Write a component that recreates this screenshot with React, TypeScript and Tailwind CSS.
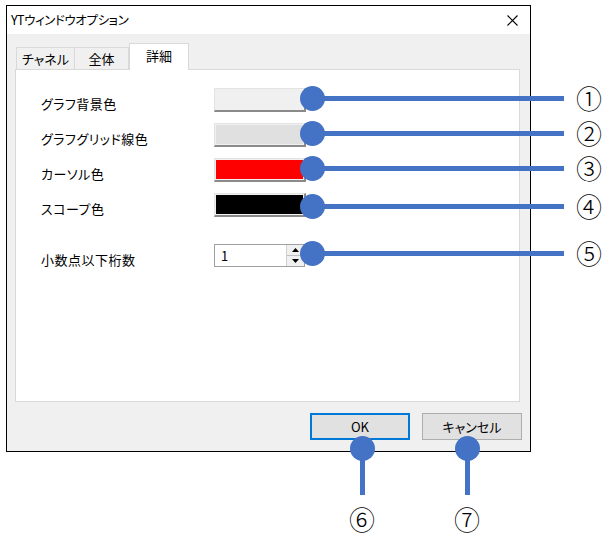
const rows = [
  { label: 'グラフ背景色', fill: 'bg-[#f0f0f0]' },
  { label: 'グラフグリッド線色', fill: 'bg-[#e0e0e0]' },
  { label: 'カーソル色', fill: 'bg-[#ff0000]' },
  { label: 'スコープ色', fill: 'bg-black' },
];

// callouts on the right: circle centre y and number
const sideMarks = [
  { y: 98, n: '①' },
  { y: 133, n: '②' },
  { y: 168, n: '③' },
  { y: 206, n: '④' },
  { y: 253, n: '⑤' },
];

const bottomMarks = [
  { x: 362, n: '⑥' },
  { x: 467, n: '⑦' },
];

function ColorButton({ fill }: { fill: string }) {
  return (
    <div className="w-[92px] h-[24px] border-t border-l border-[#e3e3e3] border-b-2 border-r-2 border-b-[#8a8a8a] border-r-[#8a8a8a] bg-[#f0f0f0] p-[1px]">
      <div className={`w-full h-full ${fill}`} />
    </div>
  );
}

function SpinBox() {
  return (
    <div className="w-[91px] h-[23px] border border-[#a0a0a0] bg-white flex">
      <div className="flex-1 pl-[6px] text-[13px] leading-[21px] text-black">1</div>
      <div className="w-[18px] flex flex-col border-l border-[#d0d0d0]">
        <div className="flex-1 bg-[#f0f0f0] border-b border-[#c0c0c0] flex items-center justify-center">
          <svg width="7" height="4" viewBox="0 0 7 4">
            <path d="M0 4 L3.5 0 L7 4 Z" fill="#000" />
          </svg>
        </div>
        <div className="flex-1 bg-[#f0f0f0] flex items-center justify-center">
          <svg width="7" height="4" viewBox="0 0 7 4">
            <path d="M0 0 L3.5 4 L7 0 Z" fill="#000" />
          </svg>
        </div>
      </div>
    </div>
  );
}

export default function App() {
  return (
    <div className="relative w-[612px] h-[539px] bg-white overflow-hidden font-['Noto_Sans_CJK_JP','Noto_Sans',sans-serif] [font-feature-settings:'palt'] text-black">
      {/* Dialog window */}
      <div className="ml-[6px] mt-[5px] w-[525px] h-[447px] border border-black flex flex-col">
        {/* Title bar */}
        <div className="h-[28px] bg-white flex items-center justify-between">
          <span className="pl-[4px] text-[12.5px] tracking-[-0.4px]">YTウィンドウオプション</span>
          <svg width="11" height="11" viewBox="0 0 11 11" className="mr-[12px]">
            <path d="M0.5 0.5 L10.5 10.5 M10.5 0.5 L0.5 10.5" stroke="#000" strokeWidth="1.1" />
          </svg>
        </div>

        {/* Body */}
        <div className="flex-1 bg-[#f0f0f0] pl-[8px] pr-[8px] pt-[9px] flex flex-col">
          {/* Tabs */}
          <div className="h-[26px] flex items-end pl-[1px] text-[13px]">
            <div className="w-[58px] h-[22px] border-l border-t border-[#d9d9d9] bg-[#f0f0f0] flex items-center justify-center">
              チャネル
            </div>
            <div className="w-[55px] h-[22px] border-l border-t border-r border-[#d9d9d9] bg-[#f0f0f0] flex items-center justify-center">
              全体
            </div>
            <div className="relative z-10 -mb-px w-[60px] h-[27px] border-l border-t border-r border-[#d9d9d9] bg-white flex items-center justify-center pb-[2px]">
              詳細
            </div>
          </div>

          {/* Tab panel */}
          <div className="w-[505px] h-[333px] border border-[#d9d9d9] bg-white pt-[18px] text-[13px] tracking-[0.5px]">
            <div className="flex flex-col gap-[11px]">
              {rows.map((r) => (
                <div key={r.label} className="flex items-start h-[24px]">
                  <div className="w-[198px] pl-[25px] mt-[8px] leading-[16px]">{r.label}</div>
                  <ColorButton fill={r.fill} />
                </div>
              ))}
            </div>
            <div className="flex items-start mt-[27px]">
              <div className="w-[198px] pl-[25px] mt-[8px] leading-[16px]">小数点以下桁数</div>
              <SpinBox />
            </div>
          </div>

          {/* Buttons */}
          <div className="flex justify-end gap-[12px] pt-[11px] text-[13px]">
            <div className="w-[100px] h-[27px] border-2 border-[#0078d7] bg-[#e1e1e1] flex items-center justify-center">
              OK
            </div>
            <div className="w-[100px] h-[27px] border border-[#adadad] bg-[#e1e1e1] flex items-center justify-center">
              キャンセル
            </div>
          </div>
        </div>
      </div>

      {/* Callouts, right side */}
      {sideMarks.map((m) => (
        <div key={m.n}>
          <div className="absolute left-[312px] w-[252px] h-[5px] bg-[#4472c4]" style={{ top: m.y - 2 }} />
          <div className="absolute left-[300px] w-[25px] h-[25px] rounded-full bg-[#4472c4]" style={{ top: m.y - 12 }} />
          <div className="absolute left-[573px] w-[32px] h-[32px] flex items-center justify-center text-[26px] font-light leading-none" style={{ top: m.y - 16 }}>
            {m.n}
          </div>
        </div>
      ))}

      {/* Callouts, bottom */}
      {bottomMarks.map((m) => (
        <div key={m.n}>
          <div className="absolute top-[448px] w-[5px] h-[47px] bg-[#4472c4]" style={{ left: m.x - 2 }} />
          <div className="absolute top-[436px] w-[25px] h-[25px] rounded-full bg-[#4472c4]" style={{ left: m.x - 12 }} />
          <div className="absolute top-[503px] w-[32px] h-[32px] flex items-center justify-center text-[26px] font-light leading-none" style={{ left: m.x - 16 }}>
            {m.n}
          </div>
        </div>
      ))}
    </div>
  );
}
